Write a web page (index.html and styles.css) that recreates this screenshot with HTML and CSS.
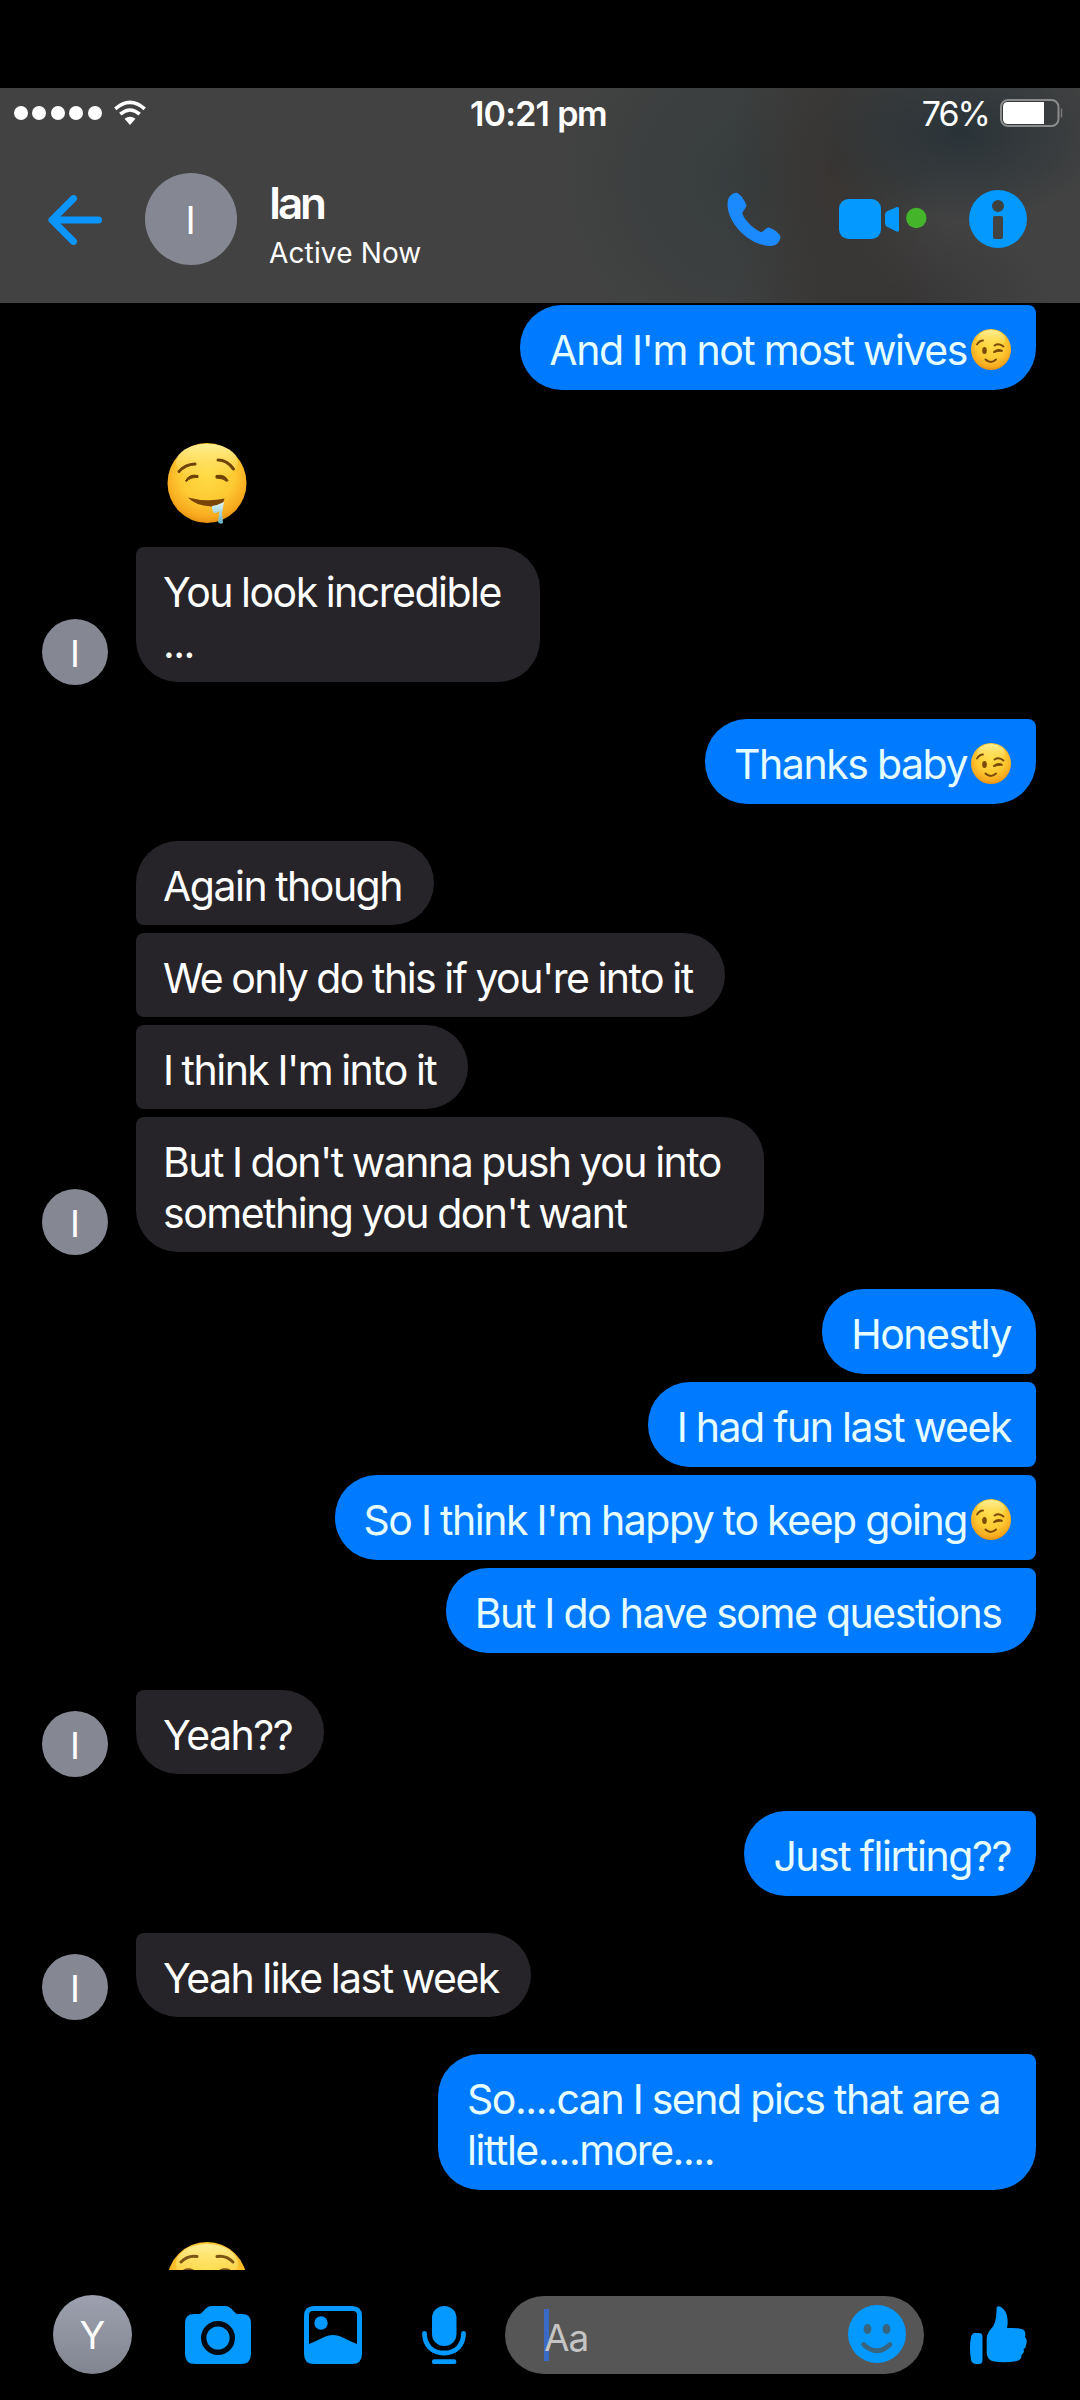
FILE: index.html
```html
<!DOCTYPE html>
<html lang="en">
<head>
<meta charset="utf-8">
<title>Ian</title>
<link rel="stylesheet" href="styles.css">
</head>
<body>
<svg class="defs" width="0" height="0" aria-hidden="true">
  <defs>
    <radialGradient id="face" cx="50%" cy="38%" r="64%">
      <stop offset="0" stop-color="#ffdc45"/>
      <stop offset=".55" stop-color="#fdca33"/>
      <stop offset=".85" stop-color="#f8a91e"/>
      <stop offset="1" stop-color="#e08a10"/>
    </radialGradient>
    <linearGradient id="shine" x1="0" y1="0" x2="0" y2="1">
      <stop offset="0" stop-color="#fff6a8" stop-opacity=".85"/>
      <stop offset="1" stop-color="#ffe766" stop-opacity="0"/>
    </linearGradient>
    <linearGradient id="drool" x1="0" y1="0" x2="0" y2="1">
      <stop offset="0" stop-color="#e3f6fb"/>
      <stop offset="1" stop-color="#5fb2c4"/>
    </linearGradient>
    <symbol id="wink" viewBox="0 0 40 41">
      <ellipse cx="20" cy="20.500" rx="20" ry="20.500" fill="url(#face)"/>
      <ellipse cx="20" cy="10" rx="14" ry="9" fill="url(#shine)"/>
      <g fill="none" stroke="#7a4a08" stroke-width="1.900" stroke-linecap="round">
        <path d="M6 15.500Q8.500 11.500 12 11.500"/>
        <path d="M23.500 16.500Q28 13.500 32.500 17.500"/>
        <path d="M23 23Q27 19.500 31.500 22Q27.500 21.500 23 23"/>
        <path d="M14.500 30.500Q19.500 35.500 25 30.500" stroke-width="2"/>
      </g>
      <ellipse cx="13.500" cy="21.500" rx="2.300" ry="3.500" fill="#7a4a08"/>
    </symbol>
    <symbol id="drooling" viewBox="0 0 80 81">
      <ellipse cx="40" cy="40" rx="39.500" ry="40" fill="url(#face)"/>
      <ellipse cx="40" cy="19" rx="31" ry="18" fill="url(#shine)"/>
      <g fill="none" stroke="#6f4308" stroke-width="3" stroke-linecap="round" stroke-linejoin="round">
        <path d="M12 28.500Q18 21.500 28 21"/>
        <path d="M51 17Q60 17 66.500 26"/>
      </g>
      <g fill="#6f4308" stroke="#6f4308" stroke-linejoin="round">
        <path d="M18.500 38Q22 30.500 31 32.500V34.500Q23 34 19.500 38.500Z"/>
        <path d="M49 32.500Q58 31 61 37.500L60 38.500Q56 35 49 35Z"/>
      </g>
      <path d="M21 54.500Q40 59.500 57.500 55.500Q56 65 44 63.500Q28 62.500 21 54.500Z" fill="#7a4408"/>
      <path d="M45 63Q51 62 57 59L55 70L56 80Q53 82 51 79L52.500 68L49 70Q45 71 45 63Z" fill="url(#drool)"/>
    </symbol>
    <symbol id="relieved" viewBox="0 0 80 80">
      <circle cx="40" cy="40" r="40" fill="url(#face)"/>
      <ellipse cx="40" cy="22" rx="31" ry="20" fill="url(#shine)"/>
      <g fill="none" stroke="#7b5314" stroke-width="3" stroke-linecap="round">
        <path d="M14 20Q21 13 30 14.500"/>
        <path d="M50 14.500Q59 13 66 20"/>
        <path d="M17 29Q21 26.500 26 29M53 29Q58 26.500 63 29"/>
      </g>
    </symbol>
  </defs>
</svg>
<main class="phone">
  <header class="top">
    <div class="status">
      <div class="signal">
        <i class="bar"></i><i class="bar"></i><i class="bar"></i><i class="bar"></i><i class="bar"></i>
        <svg class="wifi" viewBox="0 0 32 26" width="32" height="26">
          <g fill="none" stroke="#fff" stroke-linecap="butt">
            <path d="M1.300 8.800Q16-4.200 30.700 8.800" stroke-width="3.600"/>
            <path d="M6.300 14.200Q16 5.800 25.700 14.200" stroke-width="3.600"/>
          </g>
          <path d="M10.500 18.800Q16 14.600 21.500 18.800L16 25Z" fill="#fff"/>
        </svg>
      </div>
      <div class="clock">10:21<span class="ampm">pm</span></div>
      <div class="power">
        <span class="percent">76%</span>
        <svg viewBox="0 0 64 28" width="64" height="28">
          <rect x="1" y="1" width="57.500" height="26" rx="7" fill="none" stroke="#8b8b8b" stroke-width="2"/>
          <path d="M8 3H44V25H8Q3 25 3 20V8Q3 3 8 3Z" fill="#fff"/>
          <path d="M61.500 9.500V18.500" stroke="#777" stroke-width="1.500"/>
        </svg>
      </div>
    </div>
    <div class="bar-row">
      <svg class="back" viewBox="0 0 54 50" width="54" height="50">
        <path d="M25.500 3.500L4 25L25.500 46.500M5 25H50.500" fill="none" stroke="#0a95ff" stroke-width="7" stroke-linecap="round" stroke-linejoin="round"/>
      </svg>
      <div class="avatar large">I</div>
      <div class="who">
        <div class="name">Ian</div>
        <div class="active">Active Now</div>
      </div>
      <svg class="call" viewBox="0 0 54 54" width="54" height="54">
        <path d="M1 8C2 4 7 0 10.500 1C14 3 18 9 19.500 13C19 17 15 19 15.500 22C18 29 28 38 34 40C37 40 39 35 42 35.500C46 37 53 41 53.500 45C53 50 49 54 44 54C21 54-3 28 1 8Z" fill="#1c8aff"/>
      </svg>
      <svg class="video" viewBox="0 0 88 40" width="88" height="40">
        <rect width="42" height="40" rx="9.500" fill="#0399ff"/>
        <path d="M46 16Q46 13 48.500 12L58 8Q60 7.500 60 9.500V31Q60 33.500 57.500 32.500L48.500 28Q46 27 46 24Z" fill="#0399ff"/>
        <circle cx="77.300" cy="19" r="10.200" fill="#44b52a"/>
      </svg>
      <svg class="info" viewBox="0 0 58 58" width="58" height="58">
        <path fill-rule="evenodd" fill="#0399ff" d="M29 0A29 29 0 1 0 29 58A29 29 0 1 0 29 0ZM29 10A6 6 0 1 1 29 22A6 6 0 1 1 29 10ZM26 26H32Q34 26 34 28V47Q34 49 32 49H26Q24 49 24 47V28Q24 26 26 26Z"/>
      </svg>
    </div>
  </header>

  <section class="thread">
    <div class="group sent">
      <p class="bubble last">And I'm not most wives<svg class="wink"><use href="#wink"/></svg></p>
    </div>
    <div class="group received">
      <div class="avatar small">I</div>
      <div class="stack">
        <svg class="big-emoji" width="80" height="81"><use href="#drooling"/></svg>
        <p class="bubble last wide-1">You look incredible<br>...</p>
      </div>
    </div>
    <div class="group sent">
      <p class="bubble last">Thanks baby<svg class="wink"><use href="#wink"/></svg></p>
    </div>
    <div class="group received">
      <div class="avatar small">I</div>
      <div class="stack">
        <p class="bubble first">Again though</p>
        <p class="bubble">We only do this if you're into it</p>
        <p class="bubble">I think I'm into it</p>
        <p class="bubble last wide-2">But I don't wanna push you into<br>something you don't want</p>
      </div>
    </div>
    <div class="group sent">
      <p class="bubble first">Honestly</p>
      <p class="bubble">I had fun last week</p>
      <p class="bubble">So I think I'm happy to keep going<svg class="wink"><use href="#wink"/></svg></p>
      <p class="bubble last">But I do have some questions&nbsp;</p>
    </div>
    <div class="group received">
      <div class="avatar small">I</div>
      <div class="stack"><p class="bubble last">Yeah??</p></div>
    </div>
    <div class="group sent">
      <p class="bubble last">Just flirting??</p>
    </div>
    <div class="group received">
      <div class="avatar small">I</div>
      <div class="stack"><p class="bubble last">Yeah like last week</p></div>
    </div>
    <div class="group sent">
      <p class="bubble last wide-3">So....can I send pics that are a<br>little....more....</p>
    </div>
    <div class="group received">
      <div class="stack"><svg class="big-emoji clipped" width="80" height="80"><use href="#relieved"/></svg></div>
    </div>
  </section>

  <footer class="composer">
    <div class="avatar me">Y</div>
    <svg class="camera" viewBox="0 0 66 58" width="66" height="58">
      <path d="M27 0H40C47 0 49 8 53 8H57Q66 8 66 17V48Q66 58 56 58H10Q0 58 0 48V17Q0 8 9 8H14C18 8 20 0 27 0Z" fill="#0399ff"/>
      <circle cx="33" cy="32" r="14.300" fill="#0399ff" stroke="#000a10" stroke-width="5.400"/>
    </svg>
    <svg class="photo" viewBox="0 0 58 58" width="58" height="58">
      <path fill-rule="evenodd" fill="#0399ff" d="M10 0H48Q58 0 58 10V48Q58 58 48 58H10Q0 58 0 48V10Q0 0 10 0ZM9 5Q5 5 5 9V38C15 34 22 29 29 29S43 34 53 38V9Q53 5 49 5Z"/>
      <circle cx="17" cy="17" r="6.700" fill="#0399ff"/>
    </svg>
    <svg class="mic" viewBox="0 0 44 58" width="44" height="58">
      <rect x="10" width="24.500" height="40" rx="12" fill="#0399ff"/>
      <path d="M2.500 27.500C2.500 39 10 47 22 47S41.500 39 41.500 27.500M12.300 55.700H32" fill="none" stroke="#0399ff" stroke-width="4.800" stroke-linecap="round"/>
    </svg>
    <div class="field">
      <span class="placeholder">Aa</span>
      <svg class="smiley" viewBox="0 0 58 58" width="58" height="58">
        <circle cx="29" cy="29" r="29" fill="#0399ff"/>
        <ellipse cx="19.500" cy="24" rx="3.900" ry="5" fill="#38647d"/>
        <ellipse cx="38.500" cy="24" rx="3.900" ry="5" fill="#38647d"/>
        <path d="M15.500 39.500Q29 52 42 39.500" fill="none" stroke="#38647d" stroke-width="4.600" stroke-linecap="round"/>
      </svg>
    </div>
    <svg class="like" viewBox="0 0 57 60" width="57" height="60">
      <path d="M5 28H9Q12.500 28 12.500 32V55Q12.500 59 9 59H6Q2 59 1 55Q-1 43 1 32Q2 28 5 28Z" fill="#0399ff"/>
      <path d="M26.500 3Q27 0 31 2Q37 6 37.500 14Q38 19 37 23Q47 22.500 52 24Q56.500 26 55 32Q58 35 56 40Q56 43 53.500 44Q55 48 51.500 50Q52 55 46 56.200Q35 58 24 56.500Q17 55 16.700 48V34Q17 28 21 24Q27 18 26.500 3Z" fill="#0399ff"/>
    </svg>
  </footer>
</main>
</body>
</html>
```
FILE: styles.css
```css
* { box-sizing: border-box; }
body {
  margin: 0;
  background: #000;
  color: #fff;
  font-family: Inter, "Liberation Sans", sans-serif;
}
svg { display: block; flex: none; }
.defs { position: absolute; }
.phone {
  width: 1080px;
  height: 2400px;
  padding-top: 88px;
  display: flex;
  flex-direction: column;
  overflow: hidden;
}

/* header */
.top {
  flex: none;
  height: 215px;
  background:
    radial-gradient(ellipse 150px 90px at 960px 45px, rgba(38, 49, 54, .9), transparent),
    radial-gradient(ellipse 110px 260px at 835px 90px, rgba(56, 52, 50, .95), transparent),
    radial-gradient(ellipse 190px 190px at 745px 90px, rgba(53, 60, 61, .9), transparent),
    radial-gradient(ellipse 160px 90px at 890px 215px, rgba(54, 52, 52, .9), transparent),
    #424242;
}
.status {
  height: 50px;
  padding: 0 16px 0 14px;
  display: grid;
  grid-template-columns: 1fr auto 1fr;
  align-items: center;
}
.signal { display: flex; align-items: center; gap: 4.400px; }
.bar { width: 14px; height: 14px; border-radius: 50%; background: #fff; }
.wifi { margin-left: 8px; }
.clock { margin-right: 2px; font-size: 34px; font-weight: 600; letter-spacing: -.8px; }
.ampm { margin-left: 8px; letter-spacing: -1.500px; }
.power { display: flex; justify-content: flex-end; align-items: center; gap: 11px; font-size: 34px; letter-spacing: -2px; }
.bar-row { height: 162px; padding: 0 53px 0 48px; display: flex; align-items: center; }
.back { margin-top: 2px; }
.avatar {
  flex: none;
  border-radius: 50%;
  background: #858893;
  display: flex;
  align-items: center;
  justify-content: center;
}
.avatar.large { width: 92px; height: 92px; margin-left: 43px; padding: 2px 1px 0 0; font-size: 38px; }
.who { margin: 20px 0 0 32px; width: 200px; }
.name { margin-top: -11px; font-size: 44px; font-weight: 600; line-height: 52px; letter-spacing: -3.200px; }
.active { font-size: 28px; line-height: 34px; margin-top: 7px; letter-spacing: .15px; }
.call { margin-left: auto; }
.video { margin-left: 58px; }
.info { margin-left: 42px; }

/* conversation */
.thread {
  flex: none;
  height: 1967px;
  padding: 2px 44px 0 42px;
  display: flex;
  flex-direction: column;
  gap: 37px;
  overflow: hidden;
}
.group { flex: none; display: flex; }
.group.sent { flex-direction: column; align-items: flex-end; gap: 8px; }
.group.received { align-items: flex-end; gap: 28px; }
.stack { display: flex; flex-direction: column; align-items: flex-start; gap: 8px; }
.stack:first-child { margin-left: 94px; }
.avatar.small { width: 66px; height: 66px; margin-bottom: -3px; padding-top: 2px; font-size: 37px; }
.bubble {
  margin: 0;
  font-size: 41px;
  line-height: 51px;
  letter-spacing: -1.450px;
  word-spacing: -.6px;
  white-space: nowrap;
}
.received .bubble {
  padding: 20px 32px 13px 27px;
  background: #262429;
  letter-spacing: -1.500px;
  word-spacing: -1px;
  border-radius: 8px 42px 42px 8px;
}
.received .bubble.first { border-top-left-radius: 42px; }
.received .bubble.last { border-bottom-left-radius: 42px; }
.sent .bubble {
  padding: 20px 25px 14px 29px;
  background: #007aff;
  color: #e6fdff;
  border-radius: 42px 8px 8px 42px;
}
.sent .bubble.first { border-top-right-radius: 42px; }
.sent .bubble.last { border-bottom-right-radius: 42px; }
.wide-1 { width: 404px; }
.wide-2 { width: 628px; }
.wide-3 { width: 598px; }
.wink { display: inline-block; width: 40px; height: 41px; margin-left: 4px; vertical-align: -5px; margin-top: -5px; }
.big-emoji { margin: 16px 0 15px 31px; }
.big-emoji.clipped { margin: 15px 0 0 31px; }

/* composer */
.composer { flex: none; height: 130px; padding: 0 53px; display: flex; align-items: flex-start; padding-top: 25px; }
.avatar.me { width: 79px; height: 79px; font-size: 38px; background: linear-gradient(#9ca1af, #828590); }
.camera { margin: 11px 0 0 53px; }
.photo { margin: 11px 0 0 53px; }
.mic { margin: 11px 0 0 60px; }
.field {
  width: 420px;
  height: 78px;
  margin: 1px 0 0 39px;
  padding: 0 18px 0 39px;
  border-radius: 39px;
  background: #565657;
  display: flex;
  align-items: center;
  justify-content: space-between;
}
.placeholder {
  height: 52px;
  padding-top: 6px;
  font-size: 37px;
  line-height: 46px;
  letter-spacing: -1px;
  color: #c4c4c4;
  background: linear-gradient(#3b69c8, #3b69c8) 0 0 / 5px 52px no-repeat;
}
.smiley { margin-top: -2px; }
.like { margin: 10px 0 0 46px; }
```
